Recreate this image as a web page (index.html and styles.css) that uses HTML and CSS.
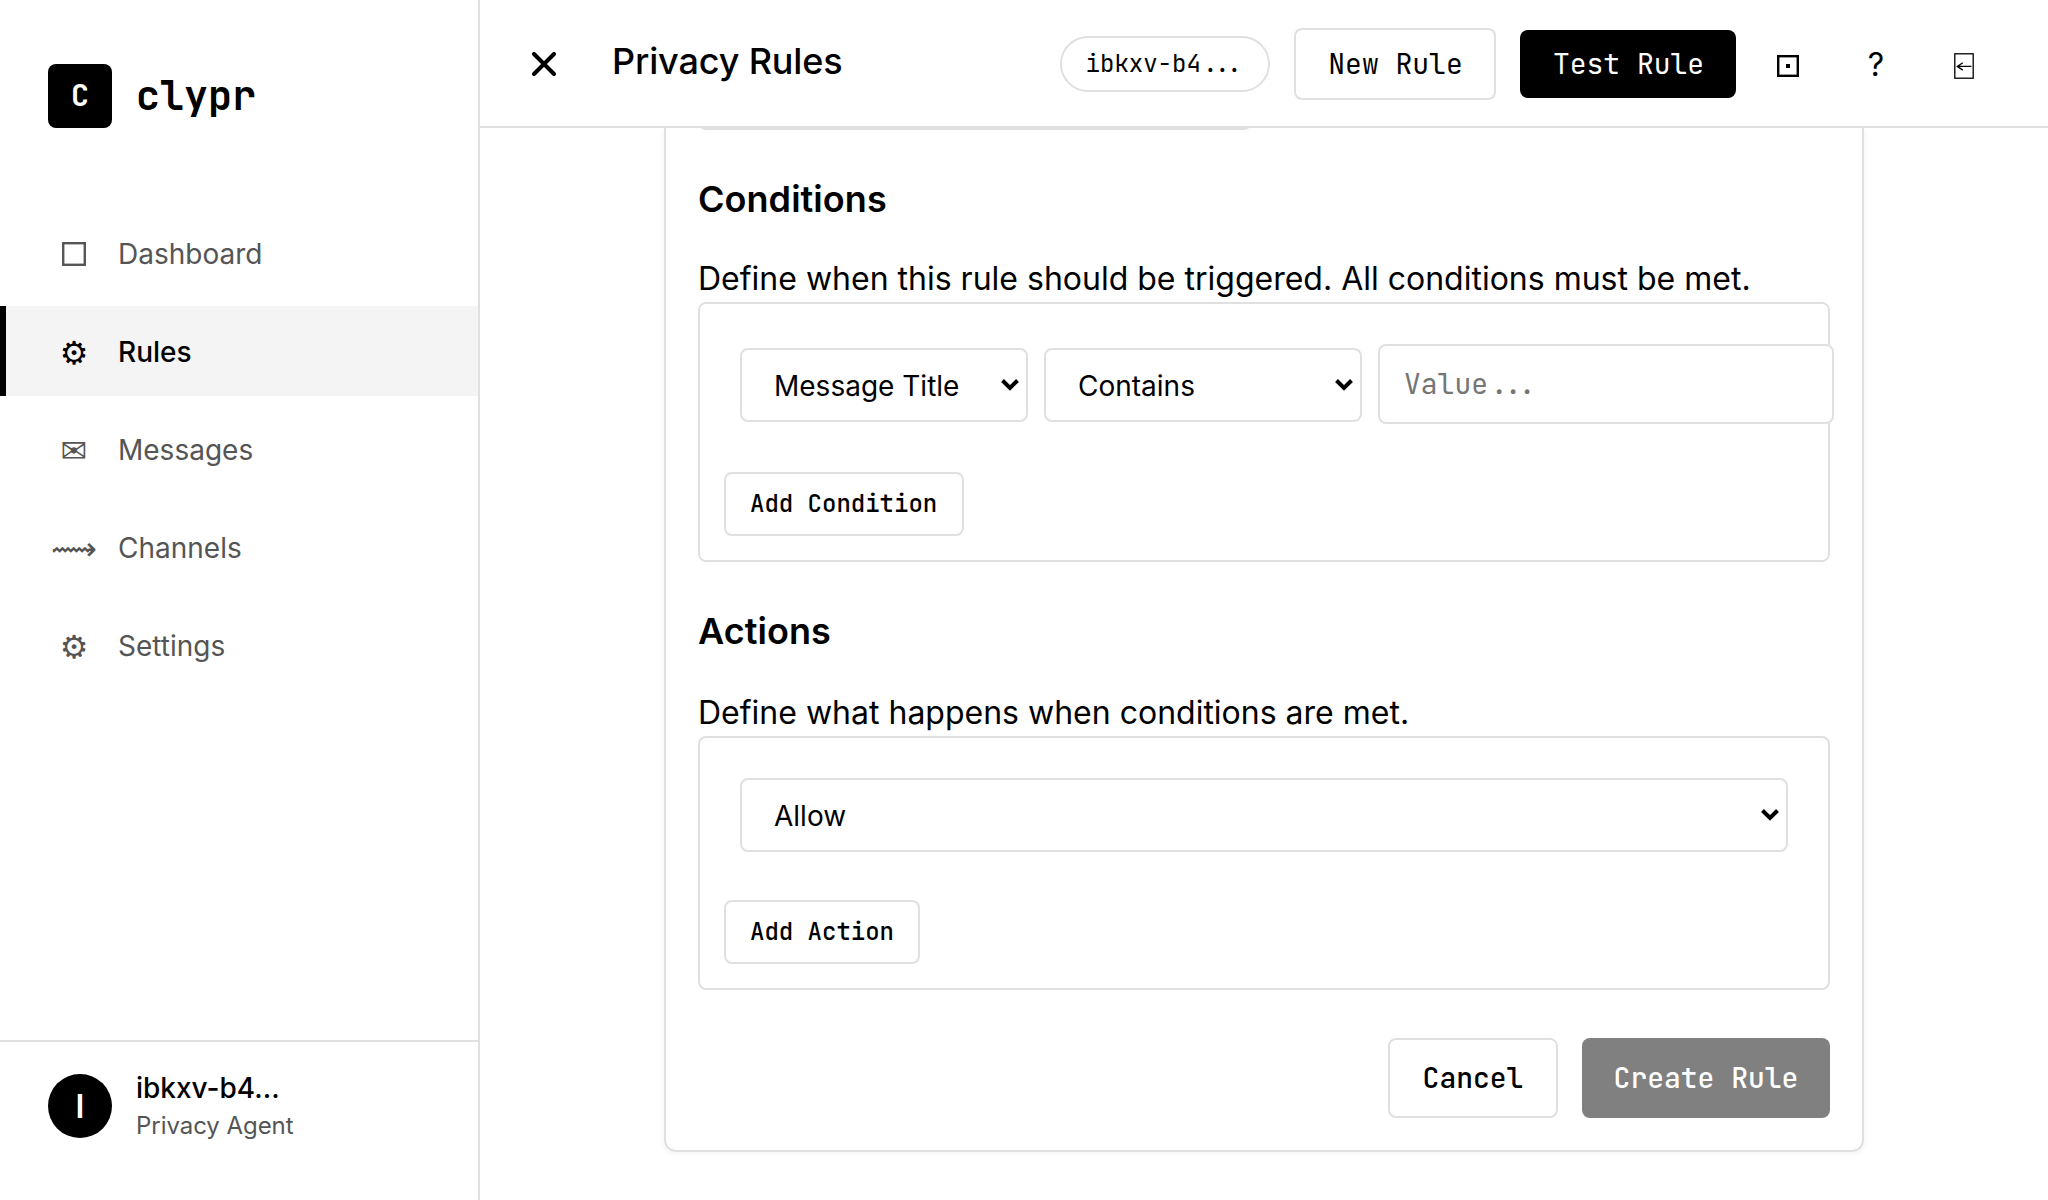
FILE: index.html
```html
<!DOCTYPE html>
<html lang="en">
<head>
<meta charset="utf-8">
<title>clypr - Privacy Rules</title>
<link rel="stylesheet" href="styles.css">
</head>
<body>
<div class="app">
  <aside class="sidebar">
    <div class="brand">
      <div class="brand-mark">C</div>
      <div class="brand-name">clypr</div>
    </div>
    <nav class="nav">
      <a class="nav-item"><span class="nav-icon"><svg class="square" viewBox="0 0 24 24"><rect x="1.2" y="1.2" width="21.6" height="21.6"/></svg></span><span>Dashboard</span></a>
      <a class="nav-item active"><span class="nav-icon glyph">⚙</span><span>Rules</span></a>
      <a class="nav-item"><span class="nav-icon glyph">✉</span><span>Messages</span></a>
      <a class="nav-item"><span class="nav-icon glyph">⟿</span><span>Channels</span></a>
      <a class="nav-item"><span class="nav-icon glyph">⚙</span><span>Settings</span></a>
    </nav>
    <div class="user">
      <div class="avatar">I</div>
      <div class="user-info">
        <div class="user-name">ibkxv-b4...</div>
        <div class="user-role">Privacy Agent</div>
      </div>
    </div>
  </aside>
  <div class="main">
    <header class="header">
      <button class="toggle" aria-label="Close menu"><svg class="cross" viewBox="0 0 24 24"><path d="M2 2 22 22M22 2 2 22"/></svg></button>
      <h1 class="title">Privacy Rules</h1>
      <div class="header-actions">
        <span class="pill">ibkxv-b4...</span>
        <button class="btn btn-new">New Rule</button>
        <button class="btn btn-test">Test Rule</button>
        <div class="icon-buttons">
          <button class="icon-btn" aria-label="Notifications"><svg class="dotted" viewBox="0 0 22 22"><rect class="frame" x="1.2" y="1.2" width="19.6" height="19.6"/><rect class="dot" x="9" y="9" width="4" height="4"/></svg></button>
          <button class="icon-btn">?</button>
          <button class="icon-btn" aria-label="Log out"><svg class="exit" viewBox="0 0 20 26"><rect x=".8" y=".8" width="18.4" height="24.4"/><path d="M17.5 13.4H3.5M8.8 9.7 3.3 13.4 8.8 17.1"/></svg></button>
        </div>
      </div>
    </header>
    <div class="content">
      <form class="card">
        <div class="prev-field"></div>
        <h3 class="section-title first">Conditions</h3>
        <p class="section-text">Define when this rule should be triggered. All conditions must be met.</p>
        <div class="builder">
          <div class="row conditions">
            <div class="select field">Message Title
              <svg class="chevron" viewBox="0 0 20 14"><path d="M2.5 2.5 10 10 17.5 2.5"/></svg>
            </div>
            <div class="select operator">Contains
              <svg class="chevron" viewBox="0 0 20 14"><path d="M2.5 2.5 10 10 17.5 2.5"/></svg>
            </div>
            <input class="value" type="text" placeholder="Value...">
          </div>
          <button class="btn-add" type="button">Add Condition</button>
        </div>
        <h3 class="section-title">Actions</h3>
        <p class="section-text">Define what happens when conditions are met.</p>
        <div class="builder">
          <div class="row">
            <div class="select action">Allow
              <svg class="chevron" viewBox="0 0 20 14"><path d="M2.5 2.5 10 10 17.5 2.5"/></svg>
            </div>
          </div>
          <button class="btn-add" type="button">Add Action</button>
        </div>
        <div class="form-actions">
          <button class="btn-form cancel" type="button">Cancel</button>
          <button class="btn-form create" type="button">Create Rule</button>
        </div>
      </form>
    </div>
  </div>
</div>
</body>
</html>
```
FILE: styles.css
```css
:root {
  --line: #e0e0e0;
  --muted: #555;
  --mono: "JetBrains Mono", "DejaVu Sans Mono", monospace;
  --sans: "Inter", "DejaVu Sans", sans-serif;
}

* { box-sizing: border-box; }

body {
  margin: 0;
  background: #fff;
  color: #000;
  font-family: var(--sans);
}

button, input { font-family: var(--mono); color: #000; margin: 0; }
button { padding: 0; border: none; background: none; white-space: nowrap; }
svg { display: block; flex: none; fill: none; stroke: currentColor; }

.app { display: flex; height: 1200px; overflow: hidden; }

/* Sidebar */
.sidebar {
  width: 480px;
  flex: none;
  display: flex;
  flex-direction: column;
  border-right: 2px solid var(--line);
}
.brand {
  display: flex;
  align-items: center;
  gap: 24px;
  height: 64px;
  margin: 64px 48px 0;
}
.brand-mark {
  width: 64px;
  height: 64px;
  display: flex;
  align-items: center;
  justify-content: center;
  padding-bottom: 2px;
  border-radius: 8px;
  background: #000;
  color: #fff;
  font: 700 30px/1 var(--mono);
}
.brand-name { font: 700 40px/1 var(--mono); }
.nav {
  flex: 1;
  display: flex;
  flex-direction: column;
  gap: 8px;
  margin-top: 80px;
}
.nav-item {
  display: flex;
  align-items: center;
  gap: 24px;
  height: 90px;
  padding: 2px 0 0 48px;
  border-left: 6px solid transparent;
  color: var(--muted);
  font-size: 28px;
  line-height: 44px;
}
.nav-item.active {
  border-left-color: #000;
  background: #f4f4f4;
  color: #000;
  font-weight: 500;
}
.nav-icon {
  width: 40px;
  display: flex;
  justify-content: center;
  font: 400 32px/44px "DejaVu Sans", sans-serif;
}
.glyph { padding-top: 2px; }
.square { width: 24px; height: 24px; stroke-width: 2.4; }
.user {
  height: 160px;
  display: flex;
  gap: 24px;
  padding: 32px 48px;
  border-top: 2px solid var(--line);
}
.avatar {
  width: 64px;
  height: 64px;
  display: flex;
  align-items: center;
  justify-content: center;
  border-radius: 50%;
  background: #000;
  color: #fff;
  font-size: 32px;
  font-weight: 600;
}
.user-name { font-size: 28px; font-weight: 500; line-height: 28px; }
.user-role { margin-top: 10px; font-size: 24px; line-height: 28px; letter-spacing: -.05px; color: var(--muted); }

/* Header */
.main { flex: 1; display: flex; flex-direction: column; min-width: 0; }
.header {
  position: relative;
  z-index: 1;
  flex: none;
  height: 128px;
  display: flex;
  align-items: center;
  padding: 2px 48px 0 32px;
  background: #fff;
  border-bottom: 2px solid var(--line);
}
.toggle {
  width: 64px;
  height: 64px;
  display: flex;
  align-items: center;
  justify-content: center;
}
.cross { width: 24px; height: 24px; stroke-width: 4; stroke-linecap: round; }
.title {
  margin: 0 0 6px 36px;
  font-size: 36px;
  font-weight: 500;
  line-height: 44px;
  letter-spacing: -.15px;
}
.header-actions { display: flex; align-items: center; gap: 24px; margin-left: auto; }
.pill {
  height: 56px;
  padding: 0 24px;
  border: 2px solid var(--line);
  border-radius: 28px;
  font: 400 24px/51px var(--mono);
}
.btn { border-radius: 8px; font-size: 28px; }
.btn-new { width: 202px; height: 72px; padding: 0 0 1px 1px; border: 2px solid var(--line); }
.btn-test { width: 216px; height: 68px; padding: 0 0 1px 1px; background: #000; color: #fff; }
.icon-buttons { display: flex; gap: 16px; margin-left: -8px; }
.icon-btn {
  width: 72px;
  height: 68px;
  display: flex;
  align-items: center;
  justify-content: center;
  font-family: var(--sans);
  font-size: 32px;
}
.dotted { width: 22px; height: 22px; margin-top: 4px; stroke-width: 2.4; }
.dotted .dot { fill: currentColor; stroke: none; }
.exit { width: 20px; height: 26px; margin-top: 4px; stroke-width: 1.3; }

/* Rule form */
.content { flex: 1; min-height: 0; display: flow-root; }
.card {
  display: flow-root;
  width: 1200px;
  height: 1024px;
  margin: 0 auto;
  padding: 0 32px 32px;
  border: 2px solid var(--line);
  border-top: none;
  border-radius: 0 0 12px 12px;
  box-shadow: 0 2px 6px rgba(0, 0, 0, .05);
}
.prev-field {
  width: 554px;
  height: 80px;
  margin-top: -78px;
  border: 2px solid var(--line);
  border-radius: 8px;
}
.section-title {
  margin: 0;
  padding-top: 47px;
  height: 131px;
  font-size: 36px;
  font-weight: 600;
  line-height: 44px;
  letter-spacing: .05px;
}
.section-title.first { height: 129px; }
.section-text { margin: 0; height: 43px; font-size: 32px; line-height: 40px; white-space: nowrap; }
.builder {
  padding: 24px;
  border: 2px solid var(--line);
  border-radius: 8px;
}
.row { display: flex; align-items: center; gap: 16px; padding: 16px; }
.select {
  flex: none;
  display: flex;
  align-items: center;
  justify-content: space-between;
  height: 74px;
  padding: 2px 6px 0 32px;
  border: 2px solid var(--line);
  border-radius: 8px;
  background: #fff;
  font-size: 28px;
}
.conditions .select { margin-top: 2px; }
.field { width: 288px; }
.operator { width: 318px; }
.action { width: 1048px; }
.chevron {
  width: 20px;
  height: 14px;
  margin-bottom: 2px;
  stroke-width: 4;
}
.value {
  flex: none;
  width: 456px;
  height: 80px;
  padding: 0 24px 2px;
  border: 2px solid var(--line);
  border-radius: 8px;
  background: #fff;
  font-size: 28px;
}
.value::placeholder { color: #757575; opacity: 1; }
.btn-add {
  display: block;
  height: 64px;
  margin-top: 32px;
  padding: 0 24.4px 2px 24px;
  border: 2px solid var(--line);
  border-radius: 8px;
  font-size: 24px;
  font-weight: 500;
}
.form-actions { display: flex; justify-content: flex-end; gap: 24px; margin-top: 48px; }
.btn-form { height: 80px; padding-bottom: 2px; border-radius: 8px; font-size: 28px; font-weight: 500; }
.cancel { width: 170px; border: 2px solid var(--line); }
.create { width: 248px; background: #808080; color: #fff; }
```
